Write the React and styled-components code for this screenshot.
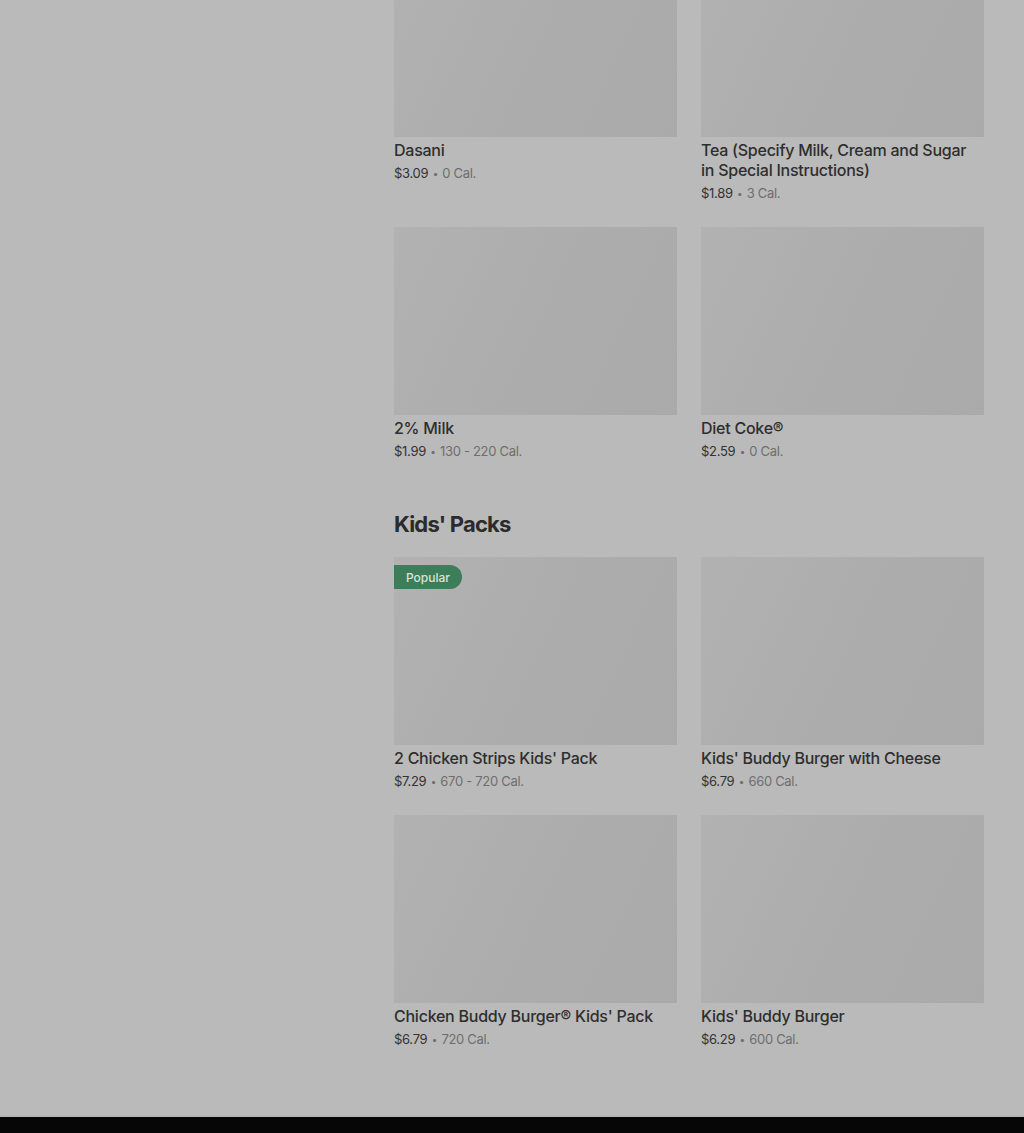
import React from 'react';
import styled, { createGlobalStyle } from 'styled-components';

const GlobalStyle = createGlobalStyle`
  html, body {
    margin: 0;
    padding: 0;
    background: #bababa;
    font-family: Inter, "Noto Sans", sans-serif;
    color: #2e2e2e;
  }
  * { box-sizing: border-box; }
`;

const Page = styled.div`
  min-height: 1133px;
  display: flex;
  flex-direction: column;
  overflow: hidden;
`;

const Body = styled.div`
  flex: 1;
  display: flex;
  padding-left: 394px;
  border-bottom: 2px solid #b4b4b4;
`;

const Menu = styled.main`
  width: 590px;
  margin-top: -51px;
  padding-bottom: 66px;
`;

const Section = styled.section`
  & + & {
    margin-top: 47px;
  }
`;

const SectionTitle = styled.h2`
  margin: 0 0 17px;
  font-size: 22px;
  line-height: 32px;
  font-weight: 700;
  letter-spacing: -0.8px;
  color: #2b2b2b;
`;

const Grid = styled.div`
  display: grid;
  grid-template-columns: 283px 283px;
  column-gap: 24px;
  row-gap: 24px;
  align-items: start;
`;

const Card = styled.div`
  display: flex;
  flex-direction: column;
`;

const Thumb = styled.div`
  position: relative;
  height: 188px;
  margin-bottom: 3px;
  background: linear-gradient(115deg, #b2b2b2 0%, #adadad 45%, #aaaaaa 100%);
`;

const Badge = styled.span`
  position: absolute;
  top: 8px;
  left: 0;
  height: 24px;
  padding: 0 12px;
  display: flex;
  align-items: center;
  border-radius: 0 12px 12px 0;
  background: #3d7d5a;
  color: #d6e6dc;
  font-size: 12px;
  font-weight: 500;
`;

const Name = styled.div`
  font-size: 16px;
  line-height: 20px;
  font-weight: 500;
  letter-spacing: -0.25px;
  color: #2e2e2e;
  padding-right: 6px;
`;

const Meta = styled.div`
  margin-top: 3px;
  height: 20px;
  font-size: 13px;
  line-height: 20px;
  letter-spacing: -0.3px;
  color: #6e6e6e;
`;

const Price = styled.span`
  color: #333333;
`;

const Dot = styled.span`
  display: inline-block;
  font-size: 10px;
  line-height: 0;
  vertical-align: 1px;
  margin: 0 1px;
`;

const Footer = styled.footer`
  height: 16px;
  background: #060606;
`;

const drinks = [
  { name: 'Dasani', price: '$3.09', cal: '0 Cal.' },
  { name: 'Tea (Specify Milk, Cream and Sugar in Special Instructions)', price: '$1.89', cal: '3 Cal.' },
  { name: '2% Milk', price: '$1.99', cal: '130 - 220 Cal.' },
  { name: 'Diet Coke®', price: '$2.59', cal: '0 Cal.' },
];

const kids = [
  { name: "2 Chicken Strips Kids' Pack", price: '$7.29', cal: '670 - 720 Cal.', popular: true },
  { name: "Kids' Buddy Burger with Cheese", price: '$6.79', cal: '660 Cal.' },
  { name: "Chicken Buddy Burger® Kids' Pack", price: '$6.79', cal: '720 Cal.' },
  { name: "Kids' Buddy Burger", price: '$6.29', cal: '600 Cal.' },
];

function Item({ item }) {
  return (
    <Card>
      <Thumb>{item.popular && <Badge>Popular</Badge>}</Thumb>
      <Name>{item.name}</Name>
      <Meta>
        <Price>{item.price}</Price> <Dot>•</Dot> {item.cal}
      </Meta>
    </Card>
  );
}

export default function App() {
  return (
    <>
      <GlobalStyle />
      <Page>
        <Body>
          <Menu>
            <Section>
              <Grid>
                {drinks.map((d) => <Item key={d.name} item={d} />)}
              </Grid>
            </Section>
            <Section>
              <SectionTitle>Kids' Packs</SectionTitle>
              <Grid>
                {kids.map((d) => <Item key={d.name} item={d} />)}
              </Grid>
            </Section>
          </Menu>
        </Body>
        <Footer />
      </Page>
    </>
  );
}
